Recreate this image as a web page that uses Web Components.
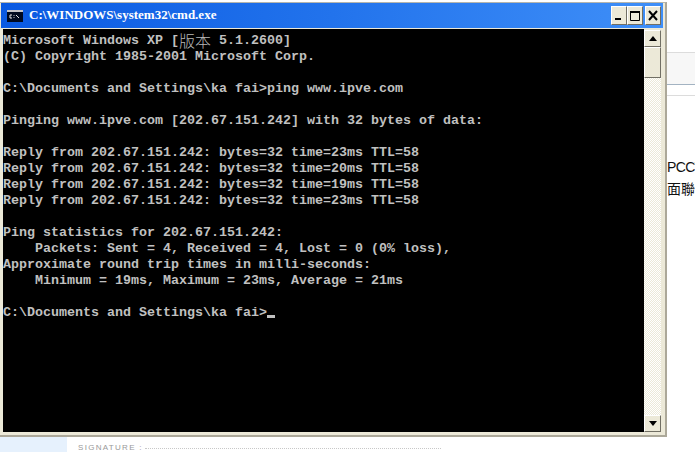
<!DOCTYPE html>
<html>
<head>
<meta charset="utf-8">
<style>
  html, body { margin: 0; height: 100%; background: #fff; overflow: hidden; }
</style>
</head>
<body>
<page-behind>
  <cmd-window title-text="C:\WINDOWS\system32\cmd.exe">
<console-text><div>Microsoft Windows XP [<span style="font:300 16px/16px 'Noto Sans CJK TC',sans-serif;vertical-align:top;position:relative;top:-1px;color:#b8b8b8">版本</span> 5.1.2600]</div>(C) Copyright 1985-2001 Microsoft Corp.

C:\Documents and Settings\ka fai>ping www.ipve.com

Pinging www.ipve.com [202.67.151.242] with 32 bytes of data:

Reply from 202.67.151.242: bytes=32 time=23ms TTL=58
Reply from 202.67.151.242: bytes=32 time=20ms TTL=58
Reply from 202.67.151.242: bytes=32 time=19ms TTL=58
Reply from 202.67.151.242: bytes=32 time=23ms TTL=58

Ping statistics for 202.67.151.242:
    Packets: Sent = 4, Received = 4, Lost = 0 (0% loss),
Approximate round trip times in milli-seconds:
    Minimum = 19ms, Maximum = 23ms, Average = 21ms

C:\Documents and Settings\ka fai></console-text>
  </cmd-window>
</page-behind>
<script>
class PageBehind extends HTMLElement {
  constructor() {
    super();
    const shadowRoot = this.attachShadow({mode: 'open'});
    shadowRoot.innerHTML = `
  <style>
    :host { display: block; position: relative; width: 695px; height: 452px; overflow: hidden; background: #fff; }
    .rule { position: absolute; left: 667px; right: 0; height: 1px; background: #dcdcdc; }
    .band { position: absolute; left: 667px; right: 0; top: 53px; height: 31px; background: #f7f7f7; }
    .txt { position: absolute; left: 667px; font: 14px/16px "Liberation Sans", "Noto Sans CJK TC", sans-serif; color: #111; white-space: nowrap; }
    .side { position: absolute; left: 0; top: 437px; width: 67px; height: 15px; background: #e6f1fd; }
    .sig { position: absolute; left: 78px; top: 444px; display: flex; align-items: center; gap: 2px; font: 8px/8px "Liberation Sans", sans-serif; letter-spacing: 1.3px; color: #999; }
    .dots { width: 296px; border-top: 1px dotted #c8c8c8; }
  </style>
  <div class="band"></div>
  <div class="rule" style="top:52px"></div>
  <div class="rule" style="top:84px;background:#a3b3c2"></div>
  <div class="rule" style="top:95px"></div>
  <div class="txt" style="top:159px;letter-spacing:-.6px">PCCT</div>
  <div class="txt" style="top:181px">面聯</div>
  <div class="side"></div>
  <div class="sig"><span>SIGNATURE :</span><span class="dots"></span></div>
  <slot></slot>`;
  }
}

class CmdWindow extends HTMLElement {
  constructor() {
    super();
    const shadowRoot = this.attachShadow({mode: 'open'});
    shadowRoot.innerHTML = `
  <style>
    :host {
      position: absolute; left: 0; top: 2px; width: 667px; height: 435px;
      display: flex; flex-direction: column; box-sizing: border-box;
      background: #ece9d8; border-top: 1px solid #b5b5ad; border-right: 2px solid #aca899; border-bottom: 2px solid #aca899;
    }
    .title {
      height: 25px; margin: 0 2px 0 1px; padding: 0 2px 0 6px; flex: none; box-sizing: border-box;
      display: flex; align-items: center; gap: 6px;
      background: linear-gradient(90deg, #0a5ae2, #2273ec 50%, #3f8ff8);
      color: #fff; font: bold 13px "Liberation Serif", serif;
    }
    .title span { flex: 1; white-space: nowrap; padding-bottom: 1px; }
    .btns { display: flex; margin-top: -1px; }
    .btn {
      width: 16px; height: 19px; box-sizing: border-box; background: #ece9d8;
      border: 1px solid; border-color: #fff #716f64 #716f64 #fff;
      display: flex; align-items: center; justify-content: center;
    }
    .body { flex: 1; min-height: 0; display: flex; margin: 1px 4px 3px 3px; }
  </style>
  <div class="title">
    <svg width="16" height="12" viewBox="0 0 16 12"><rect width="16" height="12" fill="#c4c4c8"/><rect y="2" width="16" height="10" fill="#000a20"/><path d="M5 5H3v3h2M7 5v.800M7 7.200V8M9 5l3 3" fill="none" stroke="#e4e4e4"/></svg>
    <span id="t"></span>
    <div class="btns">
      <div class="btn"><svg width="12" height="14" viewBox="0 0 12 14"><rect x="2" y="10" width="6" height="2" fill="#000"/></svg></div>
      <div class="btn"><svg width="12" height="14" viewBox="0 0 12 14"><path d="M1.500 3.500h9v9h-9z" fill="none" stroke="#000"/><rect x="1" y="3" width="10" height="2" fill="#000"/></svg></div>
      <div class="btn" style="margin-left:2px"><svg width="12" height="14" viewBox="0 0 12 14"><path d="M2 3l8 9M10 3l-8 9" stroke="#000" stroke-width="2"/></svg></div>
    </div>
  </div>
  <div class="body">
    <slot></slot>
    <scroll-bar></scroll-bar>
  </div>`;
    shadowRoot.querySelector('#t').textContent = this.getAttribute('title-text');
  }
}

class ConsoleText extends HTMLElement {
  constructor() {
    super();
    const shadowRoot = this.attachShadow({mode: 'open'});
    shadowRoot.innerHTML = `
  <style>
    :host {
      display: block; flex: 1; min-width: 0; background: #000; color: #c0c0c0;
      font: bold 13.33px/16px "Liberation Mono", "Noto Sans CJK TC", monospace;
      overflow: hidden; padding-top: 4px;
    }
    .pre { white-space: pre; }
    .cur { display: inline-block; width: 8px; height: 3px; background: #c0c0c0; vertical-align: -2px; }
  </style>
  <div class="pre"><slot></slot><span class="cur"></span></div>`;
  }
}

class ScrollBar extends HTMLElement {
  constructor() {
    super();
    const shadowRoot = this.attachShadow({mode: 'open'});
    shadowRoot.innerHTML = `
  <style>
    :host {
      display: flex; flex-direction: column; flex: none; width: 17px; margin-top: 1px;
      background: repeating-conic-gradient(#ece9d8 0 25%, #fff 0 50%) 0 0 / 2px 2px;
    }
    .b {
      height: 17px; flex: none; box-sizing: border-box; background: #ece9d8;
      border: 1px solid; border-color: #fff #716f64 #716f64 #fff;
      display: flex; align-items: center; justify-content: center;
    }
    .thumb { height: 31px; flex: none; box-sizing: border-box; background: #ece9d8; border: 1px solid; border-color: #fff #716f64 #716f64 #fff; }
    .gap { flex: 1; }
  </style>
  <div class="b"><svg width="8" height="5" viewBox="0 0 8 5"><path d="M4 0l4 5H0z"/></svg></div>
  <div class="thumb"></div>
  <div class="gap"></div>
  <div class="b"><svg width="8" height="5" viewBox="0 0 8 5"><path d="M0 0h8L4 5z"/></svg></div>`;
  }
}

customElements.define('scroll-bar', ScrollBar);
customElements.define('console-text', ConsoleText);
customElements.define('cmd-window', CmdWindow);
customElements.define('page-behind', PageBehind);
</script>
</body>
</html>
